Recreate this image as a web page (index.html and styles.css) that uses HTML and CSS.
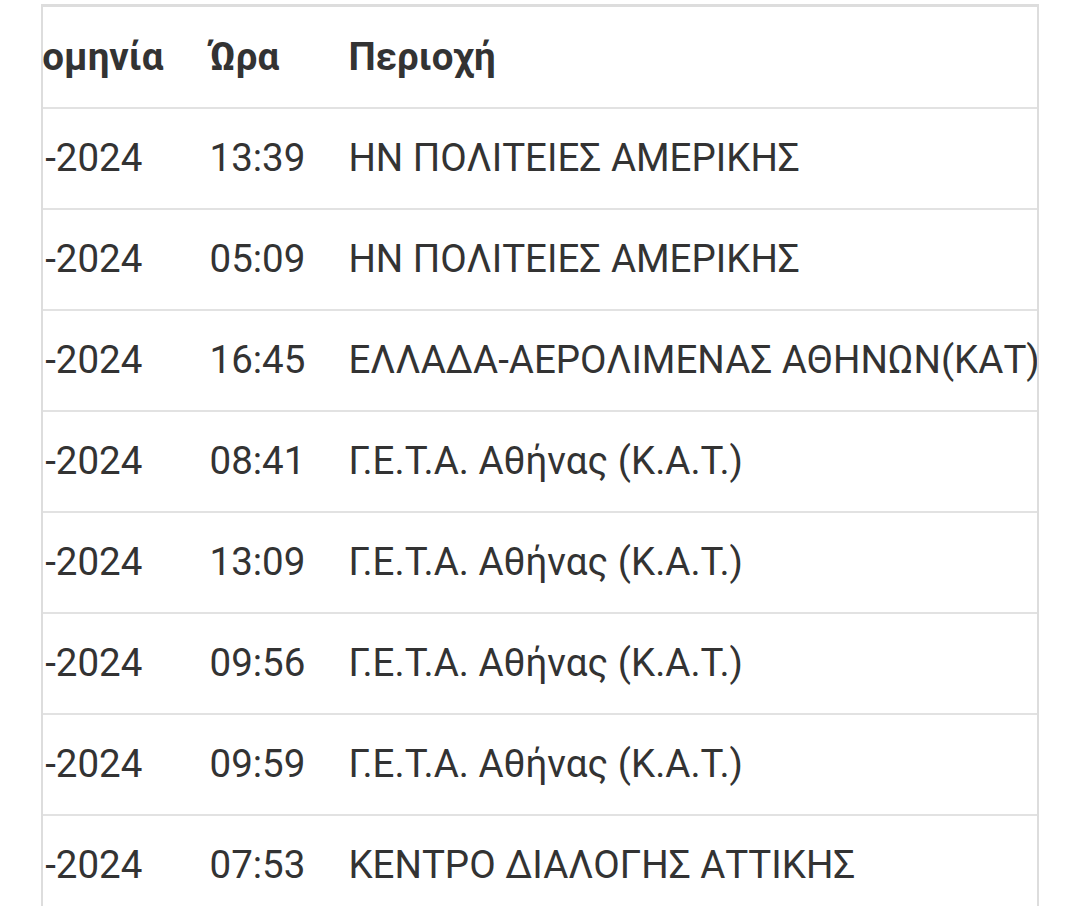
FILE: index.html
```html
<!DOCTYPE html>
<html lang="el">
<head>
<meta charset="utf-8">
<title>Ιστορικό</title>
<link rel="stylesheet" href="styles.css">
</head>
<body>
<div class="frame">
  <table class="log">
    <thead>
      <tr><th>Ημερομηνία</th><th class="time">Ώρα</th><th>Περιοχή</th></tr>
    </thead>
    <tbody>
      <tr><td>12-01-2024</td><td class="time">13:39</td><td>ΗΝ ΠΟΛΙΤΕΙΕΣ ΑΜΕΡΙΚΗΣ</td></tr>
      <tr><td>13-01-2024</td><td class="time">05:09</td><td>ΗΝ ΠΟΛΙΤΕΙΕΣ ΑΜΕΡΙΚΗΣ</td></tr>
      <tr><td>14-01-2024</td><td class="time">16:45</td><td>ΕΛΛΑΔΑ-ΑΕΡΟΛΙΜΕΝΑΣ ΑΘΗΝΩΝ(ΚΑΤ)</td></tr>
      <tr><td>15-01-2024</td><td class="time">08:41</td><td>Γ.Ε.Τ.Α. Αθήνας (Κ.Α.Τ.)</td></tr>
      <tr><td>15-01-2024</td><td class="time">13:09</td><td>Γ.Ε.Τ.Α. Αθήνας (Κ.Α.Τ.)</td></tr>
      <tr><td>16-01-2024</td><td class="time">09:56</td><td>Γ.Ε.Τ.Α. Αθήνας (Κ.Α.Τ.)</td></tr>
      <tr><td>16-01-2024</td><td class="time">09:59</td><td>Γ.Ε.Τ.Α. Αθήνας (Κ.Α.Τ.)</td></tr>
      <tr><td>17-01-2024</td><td class="time">07:53</td><td>ΚΕΝΤΡΟ ΔΙΑΛΟΓΗΣ ΑΤΤΙΚΗΣ</td></tr>
    </tbody>
  </table>
</div>
</body>
</html>
```

FILE: styles.css
```css
html, body {
  margin: 0;
  background: #ffffff;
  overflow: hidden;
}
body {
  font-family: Roboto, "Noto Sans", sans-serif;
  color: #333333;
}
.frame {
  margin: 4px 0 0 41px;
  width: 994px;
  height: 1000px;
  border: 2px solid #dddddd;
  border-top-width: 3px;
  border-bottom: none;
  overflow: hidden;
}
.log {
  border-collapse: collapse;
  margin-left: -118px;
  margin-top: 1px;
  white-space: nowrap;
  font-size: 38.5px;
}
.log th,
.log td {
  height: 97px;
  padding: 0 23px 2px;
  text-align: left;
  vertical-align: middle;
  border-bottom: 2px solid #e2e2e2;
}
.log .time {
  padding-right: 20px;
}
.log th {
  font-weight: 700;
}
.log td {
  font-weight: 400;
}
```
